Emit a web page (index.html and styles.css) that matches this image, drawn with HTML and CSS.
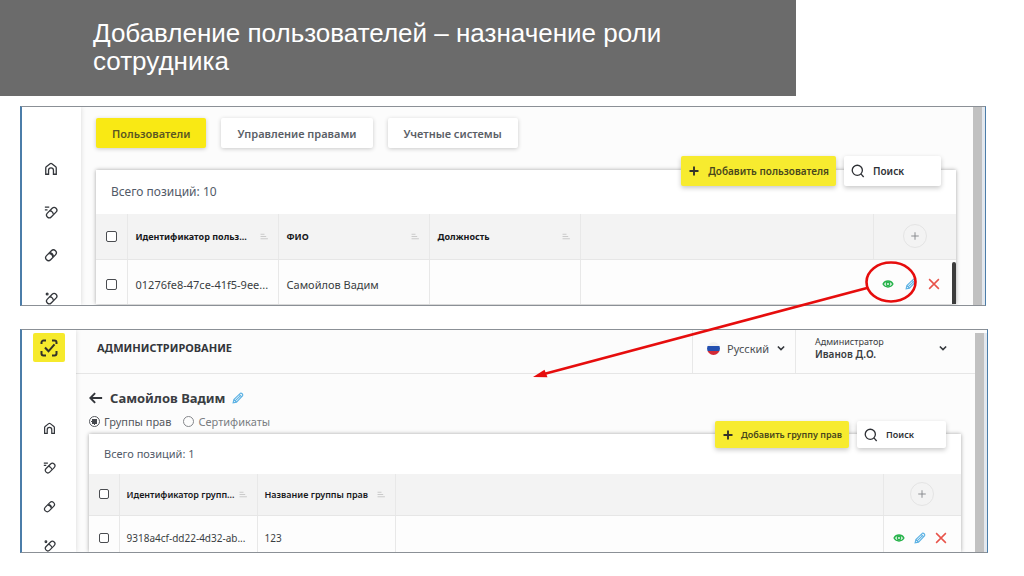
FILE: index.html
```html
<!DOCTYPE html>
<html lang="ru">
<head>
<meta charset="utf-8">
<title>Добавление пользователей – назначение роли сотрудника</title>
<link rel="stylesheet" href="styles.css">
</head>
<body>
<svg class="sprite" aria-hidden="true">
  <symbol id="home" viewBox="0 0 16 16"><path d="M2 14V6.800Q2 6 2.600 5.500L7 2Q8 1.300 9 2l4.400 3.500q.6.500.6 1.300V14h-3.200V9.500a2.800 2.800 0 0 0-5.600 0V14z"/></symbol>
  <symbol id="pill" viewBox="0 0 16 16"><rect x="0.800" y="5" width="14.400" height="6.600" rx="3.300" transform="rotate(-45 8 8.300)"/><path d="M6 6.300c2 0 4 2 4 4M7 5.300c1.500.300 3.300 2 3.700 4"/></symbol>
  <symbol id="pill-lines" viewBox="0 0 16 16"><rect x="1.800" y="5.600" width="14" height="6.200" rx="3.100" transform="rotate(-45 8.800 8.700)"/><path d="M6.600 6.600c2 0 4 2 4 4M1 2.500h5M1 5.500h3"/></symbol>
  <symbol id="pill-dot" viewBox="0 0 16 16"><rect x="1.800" y="5.600" width="14" height="6.200" rx="3.100" transform="rotate(-45 8.800 8.700)"/><path d="M6.600 6.600c2 0 4 2 4 4"/><circle cx="3.600" cy="3.400" r="1"/></symbol>
  <symbol id="plus" viewBox="0 0 16 16"><path d="M8 2v12M2 8h12"/></symbol>
  <symbol id="search" viewBox="0 0 16 16"><circle cx="7.200" cy="7.200" r="5.800"/><path d="m11.300 11.300 3.200 3.500"/></symbol>
  <symbol id="eye" viewBox="0 0 16 16"><path d="M1.500 8C4.500 2.800 11.500 2.800 14.500 8c-3 5.200-10 5.200-13 0z"/><circle cx="8" cy="8" r="2.200"/></symbol>
  <symbol id="pencil" viewBox="0 0 16 16"><path d="m1.500 14.500 1-4.500 8.500-8.200c1.800-.8 4 1.200 3.200 3.200L6 13.500zM2.500 10 6 13.500M9.500 3.200 13 6.600M4.500 11.500l6.500-6.300"/></symbol>
  <symbol id="cross" viewBox="0 0 16 16"><path d="m1.500 1.500 13 13M14.500 1.500l-13 13"/></symbol>
  <symbol id="sort" viewBox="0 0 16 16"><path d="M1 4h7M1 8h10M1 12h13"/></symbol>
  <symbol id="chevron" viewBox="0 0 16 16"><path d="m3 5.500 5 5 5-5"/></symbol>
  <symbol id="back" viewBox="0 0 16 16"><path d="M15 8H1.500M7 2.500 1.500 8 7 13.500"/></symbol>
  <symbol id="logo" viewBox="0 0 18 18"><path d="M1.500 5V3.500a2 2 0 0 1 2-2H6M12 1.500h2.500a2 2 0 0 1 2 2V5M16.500 12v2.500a2 2 0 0 1-2 2H12M6 16.500H3.500a2 2 0 0 1-2-2V12M5 8.500l3.500 3.800 6-7"/></symbol>
</svg>

<div class="slide">
  <header class="slide-header">
    <h1 class="slide-title">Добавление пользователей – назначение роли сотрудника</h1>
  </header>

  <section class="shot shot-users">
    <nav class="side" aria-label="Разделы">
      <a class="side-link" href="#" aria-label="Главная"><svg class="icon"><use href="#home"/></svg></a>
      <a class="side-link" href="#" aria-label="Серии"><svg class="icon"><use href="#pill-lines"/></svg></a>
      <a class="side-link" href="#" aria-label="Препараты"><svg class="icon"><use href="#pill"/></svg></a>
      <a class="side-link" href="#" aria-label="Упаковки"><svg class="icon"><use href="#pill-dot"/></svg></a>
    </nav>
    <div class="content">
      <div class="tabs">
        <button class="tab tab-active" type="button">Пользователи</button>
        <button class="tab" type="button">Управление правами</button>
        <button class="tab" type="button">Учетные системы</button>
      </div>
      <div class="card">
        <div class="toolbar">
          <button class="action action-main" type="button"><svg class="icon"><use href="#plus"/></svg>Добавить пользователя</button>
          <button class="action action-search" type="button"><svg class="icon"><use href="#search"/></svg>Поиск</button>
        </div>
        <p class="total">Всего позиций: 10</p>
        <table class="grid">
          <colgroup><col class="col-check"><col class="col-data"><col class="col-data"><col class="col-data"><col><col class="col-actions"></colgroup>
          <thead>
            <tr>
              <th><input class="check" type="checkbox" aria-label="Выбрать все"></th>
              <th><span class="head"><span class="label">Идентификатор польз...</span><svg class="sort"><use href="#sort"/></svg></span></th>
              <th><span class="head"><span class="label">ФИО</span><svg class="sort"><use href="#sort"/></svg></span></th>
              <th><span class="head"><span class="label">Должность</span><svg class="sort"><use href="#sort"/></svg></span></th>
              <th></th>
              <th><button class="add-col" type="button" aria-label="Добавить столбец"><svg class="icon"><use href="#plus"/></svg></button></th>
            </tr>
          </thead>
          <tbody>
            <tr>
              <td><input class="check" type="checkbox" aria-label="Выбрать строку"></td>
              <td>01276fe8-47ce-41f5-9ee...</td>
              <td>Самойлов Вадим</td>
              <td></td>
              <td></td>
              <td><span class="row-actions">
                <button class="tool tool-view" type="button" aria-label="Просмотр"><svg class="icon"><use href="#eye"/></svg></button>
                <button class="tool tool-edit" type="button" aria-label="Изменить"><svg class="icon"><use href="#pencil"/></svg></button>
                <button class="tool tool-delete" type="button" aria-label="Удалить"><svg class="icon"><use href="#cross"/></svg></button>
              </span></td>
            </tr>
          </tbody>
        </table>
        <div class="table-scroll"></div>
      </div>
    </div>
    <div class="page-scroll"></div>
  </section>

  <section class="shot shot-user">
    <nav class="side" aria-label="Разделы">
      <a class="logo" href="#" aria-label="Маркировка"><svg class="icon"><use href="#logo"/></svg></a>
      <a class="side-link" href="#" aria-label="Главная"><svg class="icon"><use href="#home"/></svg></a>
      <a class="side-link" href="#" aria-label="Серии"><svg class="icon"><use href="#pill-lines"/></svg></a>
      <a class="side-link" href="#" aria-label="Препараты"><svg class="icon"><use href="#pill"/></svg></a>
      <a class="side-link" href="#" aria-label="Упаковки"><svg class="icon"><use href="#pill-dot"/></svg></a>
    </nav>
    <div class="body">
      <div class="topbar">
        <h2 class="section-name">АДМИНИСТРИРОВАНИЕ</h2>
        <button class="lang" type="button"><span class="flag"></span>Русский<svg class="icon"><use href="#chevron"/></svg></button>
        <button class="account" type="button"><span class="account-text"><span class="account-role">Администратор</span><span class="account-name">Иванов Д.О.</span></span><svg class="icon"><use href="#chevron"/></svg></button>
      </div>
      <div class="content">
        <div class="person">
          <a class="back" href="#" aria-label="Назад"><svg class="icon"><use href="#back"/></svg></a>
          <h3 class="person-name">Самойлов Вадим</h3>
          <button class="tool tool-edit" type="button" aria-label="Изменить имя"><svg class="icon"><use href="#pencil"/></svg></button>
        </div>
        <div class="choices">
          <label class="choice choice-on"><input class="radio" type="radio" name="view" checked>Группы прав</label>
          <label class="choice"><input class="radio" type="radio" name="view">Сертификаты</label>
        </div>
        <div class="card">
          <div class="toolbar">
            <button class="action action-main" type="button"><svg class="icon"><use href="#plus"/></svg>Добавить группу прав</button>
            <button class="action action-search" type="button"><svg class="icon"><use href="#search"/></svg>Поиск</button>
          </div>
          <p class="total">Всего позиций: 1</p>
          <table class="grid">
            <colgroup><col class="col-check"><col class="col-data"><col class="col-data"><col><col class="col-actions"></colgroup>
            <thead>
              <tr>
                <th><input class="check" type="checkbox" aria-label="Выбрать все"></th>
                <th><span class="head"><span class="label">Идентификатор групп...</span><svg class="sort"><use href="#sort"/></svg></span></th>
                <th><span class="head"><span class="label">Название группы прав</span><svg class="sort"><use href="#sort"/></svg></span></th>
                <th></th>
                <th><button class="add-col" type="button" aria-label="Добавить столбец"><svg class="icon"><use href="#plus"/></svg></button></th>
              </tr>
            </thead>
            <tbody>
              <tr>
                <td><input class="check" type="checkbox" aria-label="Выбрать строку"></td>
                <td>9318a4cf-dd22-4d32-ab...</td>
                <td>123</td>
                <td></td>
                <td><span class="row-actions">
                  <button class="tool tool-view" type="button" aria-label="Просмотр"><svg class="icon"><use href="#eye"/></svg></button>
                  <button class="tool tool-edit" type="button" aria-label="Изменить"><svg class="icon"><use href="#pencil"/></svg></button>
                  <button class="tool tool-delete" type="button" aria-label="Удалить"><svg class="icon"><use href="#cross"/></svg></button>
                </span></td>
              </tr>
            </tbody>
          </table>
        </div>
      </div>
    </div>
    <div class="page-scroll"></div>
  </section>

  <svg class="callout" viewBox="0 0 1024 576" aria-hidden="true">
    <ellipse cx="891" cy="282" rx="24.500" ry="19.500"/>
    <path d="M867 288 544 374"/>
    <path class="callout-head" d="m533 377 11.500-7.300 3 7.500z"/>
  </svg>
</div>
</body>
</html>
```

FILE: styles.css
```css
* {
  box-sizing: border-box;
}

body {
  margin: 0;
  background: #fff;
  font-family: "Noto Sans", "Open Sans", sans-serif;
  color: #3a3d42;
}

h1, h2, h3, p {
  margin: 0;
}

button {
  margin: 0;
  padding: 0;
  border: 0;
  background: none;
  font: inherit;
  color: inherit;
}

.sprite {
  display: none;
}

.icon, .sort {
  display: block;
  flex: none;
  width: 14px;
  height: 14px;
  fill: none;
  stroke: currentColor;
  stroke-width: 1.5;
}

.slide {
  position: relative;
}

/* Slide heading */

.slide-header {
  width: 77.7%;
  padding: 19px 93px 21px;
  background: #6b6b6b;
}

.slide-title {
  font: 26px/28px "Liberation Sans", Arial, sans-serif;
  color: #fff;
}

/* Framed application views */

.shot {
  display: flex;
  overflow: hidden;
  border: 1px solid #8b9096;
  border-left: 2px solid #4b7da9;
  border-right-color: #4b7da9;
  background: #fcfcfc;
}

.shot-users {
  margin: 10px 38px 0 20px;
}

.shot-user {
  margin: 23px 36px 0 20px;
}

.side {
  z-index: 1;
  flex: none;
  display: flex;
  flex-direction: column;
  align-items: center;
  background: #fff;
  box-shadow: 0 0 5px rgba(0, 0, 0, 0.15);
}

.side-link {
  color: #33363b;
}

.shot-users .side {
  width: 59px;
  gap: 29px;
  padding: 55px 2px 0 0;
}

.shot-user .side {
  width: 54px;
  padding-top: 3px;
  gap: 26px;
}

.shot-user .side-link .icon {
  width: 13px;
  height: 13px;
}

.logo {
  display: grid;
  place-items: center;
  width: 32px;
  height: 29px;
  margin-bottom: 34px;
  border-radius: 2px;
  background: #f6ea2c;
  color: #33322a;
}

.logo .icon {
  width: 18px;
  height: 18px;
  stroke-width: 2;
}

.body, .shot-users .content {
  flex: 1;
  min-width: 0;
}

.shot-users .content {
  padding: 11px 17px 0 15px;
}

.page-scroll {
  flex: none;
  width: 12px;
  border-right: 3px solid #e3e8ee;
  background: #c1c1c1;
}

/* Tabs */

.tabs {
  display: flex;
  gap: 15px;
  margin-bottom: 22px;
}

.tab {
  height: 30px;
  padding: 0 16px;
  border-radius: 2px;
  background: #fff;
  box-shadow: 0 1px 4px rgba(0, 0, 0, 0.2);
  font-size: 11px;
  font-weight: 600;
  color: #5a5e66;
}

.tab-active {
  background: #f9e914;
  color: #5b5722;
}

/* Card with table */

.card {
  position: relative;
  background: #fff;
  box-shadow: 0 0 4px rgba(0, 0, 0, 0.35);
}

.toolbar {
  position: absolute;
  top: -14px;
  right: 15px;
  display: flex;
  gap: 8px;
}

.action {
  display: flex;
  align-items: center;
  height: 30px;
  padding: 0 7px;
  gap: 8px;
  border-radius: 2px;
  background: #fff;
  box-shadow: 0 2px 5px rgba(0, 0, 0, 0.22);
  font-size: 10px;
  font-weight: 600;
  color: #2e3035;
  white-space: nowrap;
}

.action-main {
  background: #f7eb2f;
  color: #48461c;
}

.action-main .icon {
  width: 12px;
  height: 12px;
  stroke-width: 2.5;
  color: #33322a;
}

.action-search {
  width: 97px;
}

.total {
  padding: 0 15px;
  font-size: 12px;
  line-height: 44px;
  color: #525a68;
}

.grid {
  width: 100%;
  table-layout: fixed;
  border-collapse: collapse;
}

.col-check {
  width: 31px;
}

.col-data {
  width: 151px;
}

.col-actions {
  width: 83px;
}

.grid th, .grid td {
  padding: 0 8px;
  border-left: 1px solid #e8e8e8;
  text-align: left;
  white-space: nowrap;
}

.grid th:first-child, .grid td:first-child {
  padding-left: 10px;
  padding-right: 0;
  border-left: 0;
}

.grid th {
  height: 45px;
  border-bottom: 1px solid #e6e6e6;
  background: #f3f3f3;
  font-size: 9px;
  font-weight: 700;
  color: #17181b;
}

.grid td {
  height: 45px;
  padding-top: 5px;
  background: #fdfdfd;
  font-size: 11px;
  color: #3a3d42;
}

.shot-users td:last-child {
  border-left: 0;
}

.head {
  display: flex;
  align-items: center;
  justify-content: space-between;
}

.sort {
  width: 9px;
  height: 9px;
  margin-right: 1px;
  color: #c3c3c3;
}

.check {
  display: block;
  appearance: none;
  width: 11px;
  height: 11px;
  margin: 0;
  border: 1px solid #4a4c50;
  border-radius: 2px;
  background: #fff;
}

.add-col {
  display: grid;
  place-items: center;
  width: 24px;
  height: 24px;
  margin: 0 auto;
  border: 1px solid #e4e4e4;
  border-radius: 50%;
  color: #85878b;
}

.add-col .icon {
  width: 10px;
  height: 10px;
}

.row-actions {
  display: flex;
  align-items: center;
  padding-left: 1px;
  gap: 11px;
}

.tool .icon {
  width: 12px;
  height: 12px;
}

.tool-view {
  color: #27b34b;
}

.tool-edit {
  color: #5cb2e4;
}

.tool-delete {
  color: #e8534a;
}

.tool-view .icon, .tool-delete .icon {
  stroke-width: 2;
}

.table-scroll {
  position: absolute;
  right: 0;
  bottom: 0;
  width: 4px;
  height: 42px;
  border-radius: 2px 2px 0 0;
  background: #3c3c3c;
}

/* User details view */

.topbar {
  display: flex;
  height: 44px;
  border-bottom: 1px solid #e6e6e6;
}

.section-name {
  flex: 1;
  padding-left: 21px;
  font-size: 11px;
  line-height: 36px;
  font-weight: 700;
  color: #33363b;
}

.lang, .account {
  display: flex;
  align-items: center;
  padding-bottom: 7px;
  border-left: 1px solid #e8e8e8;
}

.lang {
  width: 103px;
  padding-left: 14px;
  gap: 7px;
  font-size: 11px;
  color: #4a4d52;
}

.lang .icon, .account .icon {
  width: 10px;
  height: 10px;
  stroke-width: 2.5;
  color: #33363b;
}

.flag {
  width: 13px;
  height: 13px;
  border-radius: 50%;
  background: linear-gradient(#f1f1f1 33%, #2450b0 33% 66%, #d32a36 66%);
}

.account {
  justify-content: space-between;
  width: 180px;
  padding-right: 27px;
  padding-left: 19px;
  text-align: left;
}

.account-text {
  display: grid;
  font-size: 10px;
  line-height: 12px;
}

.account-role {
  font-size: 9px;
}

.account-name {
  font-weight: 600;
}

.shot-user .content {
  padding: 14px 14px 0 13px;
}

.person {
  display: flex;
  align-items: center;
  gap: 7px;
  height: 20px;
}

.person-name {
  font-size: 13px;
  line-height: 20px;
  font-weight: 700;
}

.back {
  color: #33363b;
}

.back .icon {
  stroke-width: 2.2;
}

.choices {
  display: flex;
  gap: 12px;
  height: 26px;
}

.choice {
  display: flex;
  align-items: center;
  gap: 4px;
  font-size: 11px;
  color: #7a7d82;
}

.choice-on {
  color: #55585e;
}

.radio {
  appearance: none;
  width: 11px;
  height: 11px;
  margin: 0;
  border: 1px solid #85878b;
  border-radius: 50%;
}

.radio:checked {
  border-color: #55585e;
  background: radial-gradient(#44474c 3px, #fff 3px);
}

.shot-user .toolbar {
  top: -13px;
}

.shot-user .action {
  height: 27px;
  font-size: 9px;
}

.shot-user .action-main {
  gap: 7px;
}

.shot-user .action-search {
  width: 89px;
}

.shot-user .total {
  font-size: 11px;
  line-height: 40px;
}

.shot-user .col-check {
  width: 30px;
}

.shot-user .col-data {
  width: 138px;
}

.shot-user .col-actions {
  width: 78px;
}

.shot-user th {
  height: 41px;
  font-weight: 600;
}

.shot-user th, .shot-user td {
  padding-left: 7px;
}

.shot-user td {
  height: 37px;
  padding-top: 9px;
  font-size: 10px;
}

.shot-user .row-actions {
  padding-left: 2px;
  gap: 9px;
}

.shot-user .check {
  width: 10px;
  height: 10px;
}

.shot-user .page-scroll {
  margin-top: 3px;
}

/* Callout that links the two views */

.callout {
  position: absolute;
  top: 0;
  left: 0;
  width: 1024px;
  height: 576px;
  fill: none;
  stroke: #e60d0d;
  stroke-width: 2.6;
  pointer-events: none;
}

.callout-head {
  fill: #e60d0d;
  stroke: none;
}
```
